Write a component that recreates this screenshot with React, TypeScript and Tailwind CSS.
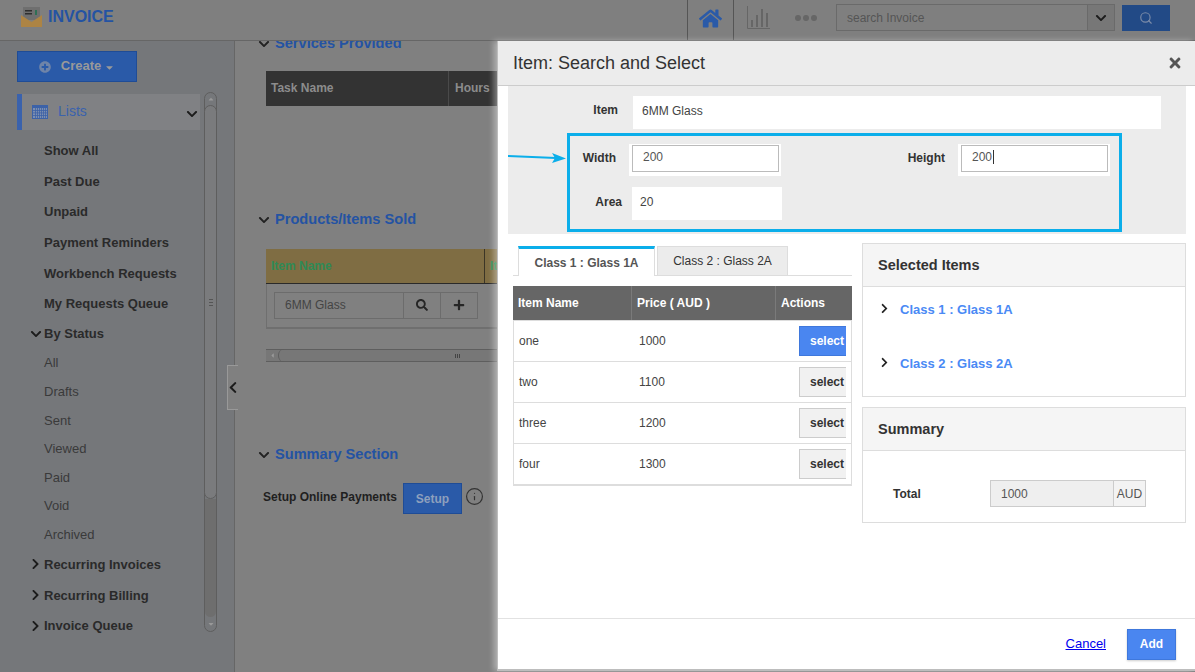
import { FaChevronDown, FaChevronLeft, FaChevronRight, FaHome, FaPlus, FaSearch, FaPlusCircle, FaTimes, FaCaretDown, FaCaretUp, FaCaretLeft } from 'react-icons/fa';
import { Search, Info } from 'lucide-react';

const boldItems = ['Show All', 'Past Due', 'Unpaid', 'Payment Reminders', 'Workbench Requests', 'My Requests Queue'];
const statusItems = ['All', 'Drafts', 'Sent', 'Viewed', 'Paid', 'Void', 'Archived'];
const moreItems = ['Recurring Invoices', 'Recurring Billing', 'Invoice Queue'];
const rows = [
  { name: 'one', price: '1000', active: true },
  { name: 'two', price: '1100', active: false },
  { name: 'three', price: '1200', active: false },
  { name: 'four', price: '1300', active: false },
];

function Logo() {
  return (
    <svg width="21" height="20" viewBox="0 0 21 20" className="shrink-0">
      <rect x="2" y="0" width="17" height="13" fill="#6f6f6f" />
      <rect x="4" y="3" width="7" height="1.5" fill="#2f2f2f" />
      <rect x="4" y="6" width="7" height="1.5" fill="#2f2f2f" />
      <rect x="14" y="3" width="2" height="5" fill="#2f6f55" />
      <path d="M0 8 L10.5 15 L21 8 V20 H0 Z" fill="#ad8444" />
    </svg>
  );
}

function CalendarIcon() {
  return (
    <svg width="16" height="14" viewBox="0 0 16 14" className="shrink-0">
      <rect x="0" y="0" width="16" height="14" fill="#3c62a8" />
      <rect x="1" y="3" width="14" height="10" fill="#7d8fb0" />
      {[3, 5, 7, 9, 11, 13].map((x) => <rect key={x} x={x} y="3" width="0.8" height="10" fill="#3c62a8" />)}
      {[5, 7.5, 10].map((y) => <rect key={y} x="1" y={y} width="14" height="0.8" fill="#3c62a8" />)}
    </svg>
  );
}

function SectionTitle({ children }: { children: string }) {
  return (
    <div className="flex items-center h-[20px]">
      <FaChevronDown className="w-[12px] h-[12px] text-[#222] ml-[23px] mr-[5px]" />
      <span className="text-[14.6px] font-bold text-[#2453a3]">{children}</span>
    </div>
  );
}

function Sidebar() {
  return (
    <aside className="w-[235px] shrink-0 h-full bg-[#75777a] border-r border-[#666] flex">
      <div className="w-[187px] shrink-0 ml-[17px]">
        <button className="mt-[10px] w-[120px] h-[31px] bg-[#2a5aa8] border border-[#1f4c96] flex items-center justify-center text-[13px] font-bold text-[#999] pb-[2px]">
          <FaPlusCircle className="w-[12px] h-[12px] text-[#6f84a8] mr-[10px] mt-[2px]" />
          Create
          <FaCaretDown className="w-[11px] h-[11px] ml-[3px] mt-[3px]" />
        </button>
        <div className="mt-[12px] w-[183px] h-[36px] bg-[#808184] border-l-[5px] border-[#3a62ad] flex items-center pl-[10px]">
          <CalendarIcon />
          <span className="ml-[10px] text-[14px] text-[#3a62ad] -mt-[2px]">Lists</span>
          <FaChevronDown className="w-[12px] h-[12px] text-[#1c1c1c] ml-auto mr-[2px] mt-[4px]" />
        </div>
        <ul className="mt-[5.3px] pl-[27px]">
          {boldItems.map((t) => (
            <li key={t} className="h-[30.7px] flex items-center text-[13px] font-bold text-[#2a2a2a]">{t}</li>
          ))}
          <li className="h-[29.5px] flex items-center text-[13px] font-bold relative text-[#2a2a2a]">
            <FaChevronDown className="absolute left-[-14px] w-[12px] h-[12px] text-[#1c1c1c]" />
            By Status
          </li>
          {statusItems.map((t) => (
            <li key={t} className="h-[28.6px] flex items-center text-[13px] text-[#3a3a3a]">{t}</li>
          ))}
          {moreItems.map((t) => (
            <li key={t} className="h-[30.8px] flex items-center text-[13px] font-bold relative text-[#2a2a2a]">
              <FaChevronRight className="absolute left-[-13px] w-[9px] h-[12px] text-[#1c1c1c]" />
              {t}
            </li>
          ))}
        </ul>
      </div>
      <div className="w-[13px] shrink-0 h-[540px] mt-[51px] border border-[#5e5e5e] rounded-[7px] flex flex-col items-center">
        <div className="h-[12px] flex items-center"><FaCaretUp className="w-[8px] h-[8px] text-[#999]" /></div>
        <div className="w-[13px] h-[394px] shrink-0 border border-[#5e5e5e] rounded-[7px] bg-[#7a7b7d] flex items-center justify-center">
          <span className="w-[4px] h-[7px] border-y border-[#555] flex items-center"><span className="w-full h-px bg-[#555]" /></span>
        </div>
        <div className="w-[11px] flex-1 bg-[#6e6e6e] rounded-b-[6px]" />
        <div className="h-[14px] flex items-center"><FaCaretDown className="w-[8px] h-[8px] text-[#999]" /></div>
      </div>
    </aside>
  );
}

function Background() {
  return (
    <main className="flex-1 h-full overflow-hidden bg-[#808080]">
      <div className="-mt-[7px]">
        <SectionTitle>Services Provided</SectionTitle>
        <div className="mt-[17px] ml-[31px] h-[35px] bg-[#333] flex items-center text-[12px] font-bold text-[#8c8c8c]">
          <span className="w-[183px] pl-[5px] pb-[2px] h-full flex items-center border-r border-[#4a4a4a]">Task Name</span>
          <span className="pl-[6px] pb-[2px]">Hours</span>
        </div>
        <div className="mt-[104px]"><SectionTitle>Products/Items Sold</SectionTitle></div>
        <div className="mt-[19px] ml-[31px] h-[35px] bg-[#7f6d43] border-b border-[#2a2a2a] flex items-center text-[12px] font-bold text-[#2f8a56]">
          <span className="w-[219px] pl-[5px] h-full flex items-center border-r border-[#3b3526]">Item Name</span>
          <span className="pl-[5px]">It</span>
        </div>
        <div className="ml-[31px] h-[45px] border-b-2 border-l border-[#6f6f6f] pl-[7px] pb-[1px] flex items-center">
          <div className="w-[204px] h-[27px] border border-[#6c6c6c] flex items-center text-[12px] text-[#444]">
            <span className="w-[129px] pl-[10px] h-full flex items-center border-r border-[#6c6c6c]">6MM Glass</span>
            <span className="w-[37px] h-full flex items-center justify-center border-r border-[#6c6c6c]"><FaSearch className="w-[12px] h-[12px] text-[#262626]" /></span>
            <span className="flex-1 flex items-center justify-center"><FaPlus className="w-[12px] h-[12px] text-[#262626]" /></span>
          </div>
        </div>
        <div className="mt-[20px] ml-[31px] h-[13px] border-y border-[#5e5e5e] bg-[#777] flex items-center">
          <FaCaretLeft className="w-[7px] h-[7px] text-[#999] ml-[3px]" />
          <span className="ml-[2px] h-[13px] w-[8px] border-l border-[#5e5e5e] rounded-l-[6px]" />
          <span className="ml-[169px] flex gap-[1px]">
            <span className="w-px h-[4px] bg-[#444]" />
            <span className="w-px h-[4px] bg-[#444]" />
            <span className="w-px h-[4px] bg-[#444]" />
          </span>
        </div>
        <div className="mt-[83px]"><SectionTitle>Summary Section</SectionTitle></div>
        <div className="mt-[18px] ml-[28px] flex items-center">
          <span className="w-[140px] pb-[3px] text-[12px] font-bold text-[#1f1f1f]">Setup Online Payments</span>
          <button className="w-[59px] h-[31px] bg-[#2a5aa8] border border-[#1f4c96] text-[12px] font-bold text-[#8ea0bd]">Setup</button>
          <Info className="w-[19px] h-[19px] ml-[3px] -mt-[4px] text-[#333]" strokeWidth={1.5} />
        </div>
      </div>
    </main>
  );
}

function Field({ label, value, labelClass, caret }: { label: string; value: string; labelClass: string; caret?: boolean }) {
  return (
    <div className="flex items-center">
      <label className={`text-[12px] font-bold text-[#333] pb-[4px] ${labelClass}`}>{label}</label>
      <div className="w-[152px] h-[32px] bg-white pt-[1px] pl-[3px] pr-[2px]">
        <div className="h-[27px] border border-[#bbb] flex items-center pl-[10px] pb-[3px] text-[12px] text-[#555]">
          {value}
          {caret && <span className="w-px h-[14px] bg-[#333] ml-px" />}
        </div>
      </div>
    </div>
  );
}

function ItemForm() {
  return (
    <section className="relative ml-[10px] mr-[9px] h-[148px] bg-[#ececec] pt-[10px]">
      <div className="flex items-center">
        <label className="w-[110px] text-right text-[12px] font-bold text-[#333] pb-[6px]">Item</label>
        <div className="ml-[15px] w-[528px] h-[33px] bg-white flex items-center pl-[9px] pb-[3px] text-[12px] text-[#444]">6MM Glass</div>
      </div>
      <div className="mt-[4px] ml-[59px] w-[555px] h-[99px] border-[3px] border-[#0baeea] pt-[8px]">
        <div className="flex">
          <Field label="Width" value="200" labelClass="w-[46px] text-right mr-[13px]" />
          <Field label="Height" value="200" labelClass="w-[164px] text-right mr-[13px]" caret />
        </div>
        <div className="mt-[11px] flex items-center">
          <label className="w-[52px] text-right text-[12px] font-bold text-[#333] pb-[4px]">Area</label>
          <div className="ml-[10px] w-[150px] h-[33px] bg-white flex items-center pl-[8px] pb-[4px] text-[12px] text-[#444]">20</div>
        </div>
      </div>
      <svg width="60" height="14" viewBox="0 0 60 14" className="absolute left-0 top-[64px]">
        <path d="M0 6 L48 8" stroke="#0baeea" strokeWidth="2" fill="none" />
        <path d="M44 3 L58 8.5 L44 13 L47 8 Z" fill="#0baeea" />
      </svg>
    </section>
  );
}

function ClassTable() {
  return (
    <div className="w-[339px] shrink-0 ml-[15px]">
      <div className="h-[32px] flex items-end border-b border-[#ddd] pl-[5px]">
        <div className="w-[137px] h-[30px] -mb-px bg-white border-t-[3px] border-x border-t-[#0baeea] border-x-[#ddd] flex items-center justify-center text-[12px] font-bold text-[#555]">Class 1 : Glass 1A</div>
        <div className="w-[131px] h-[29px] ml-[2px] bg-[#ececec] border border-b-0 border-[#ddd] flex items-center justify-center text-[12px] text-[#333]">Class 2 : Glass 2A</div>
      </div>
      <div className="mt-[10px] h-[34px] bg-[#666] flex items-center text-[12px] font-bold text-white">
        <span className="w-[119px] pl-[5px] h-full flex items-center border-r border-[#7a7a7a]">Item Name</span>
        <span className="w-[144px] pl-[5px] h-full flex items-center border-r border-[#7a7a7a]">Price ( AUD )</span>
        <span className="pl-[5px]">Actions</span>
      </div>
      <div className="border border-[#ddd]">
        {rows.map((r) => (
          <div key={r.name} className="h-[41px] border-b border-[#ddd] flex items-center text-[12px] text-[#444]">
            <span className="w-[125px] pl-[5px]">{r.name}</span>
            <span className="w-[160px]">{r.price}</span>
            <button className={`w-[47px] h-[30px] overflow-hidden whitespace-nowrap text-left pl-[10px] border border-r-0 text-[12px] font-bold ${r.active ? 'bg-[#4a86f0] border-[#3f78dc] text-white' : 'bg-[#f1f1f1] border-[#ccc] text-[#333]'}`}>select</button>
          </div>
        ))}
      </div>
    </div>
  );
}

function PanelHeader({ children, h }: { children: string; h: string }) {
  return <div className={`${h} bg-[#f5f5f5] border-b border-[#ddd] flex items-center pl-[15px] pt-[2px] text-[14.5px] font-bold text-[#333]`}>{children}</div>;
}

function RightPanels() {
  return (
    <div className="w-[324px] shrink-0 ml-[10px] -mt-[1px]">
      <div className="h-[154px] border border-[#ddd]">
        <PanelHeader h="h-[43px]">Selected Items</PanelHeader>
        {['Class 1 : Glass 1A', 'Class 2 : Glass 2A'].map((t) => (
          <div key={t} className="h-[54px] pb-[9px] flex items-center text-[13px] font-bold text-[#4a8af5] pl-[17px]">
            <FaChevronRight className="w-[9px] h-[11px] text-[#222] mr-[11px] -mt-[2px]" />
            <span>{t}</span>
          </div>
        ))}
      </div>
      <div className="mt-[10px] h-[116px] border border-[#ddd]">
        <PanelHeader h="h-[43px]">Summary</PanelHeader>
        <div className="flex items-center pl-[30px] pt-[29px]">
          <span className="w-[97px] text-[12px] font-bold text-[#333]">Total</span>
          <div className="w-[124px] h-[27px] bg-[#efefef] border border-[#ccc] flex items-center pl-[10px] text-[12px] text-[#555]">1000</div>
          <div className="w-[32px] h-[27px] bg-[#f3f3f3] border border-l-0 border-[#ccc] flex items-center justify-center text-[12px] text-[#555]">AUD</div>
        </div>
      </div>
    </div>
  );
}

function Modal() {
  return (
    <div className="absolute left-[497px] right-0 top-[41px] h-[630px] bg-white border-b-2 border-l border-[#bdbdbd] shadow-[-3px_0_6px_rgba(255,255,255,0.4)] flex flex-col">
      <header className="h-[45px] shrink-0 bg-[#ececec] border-b border-[#ccc] flex items-center pl-[15px] pr-[12px]">
        <h2 className="text-[18px] text-[#333]">Item: Search and Select</h2>
        <FaTimes className="ml-auto w-[16px] h-[16px] text-[#555]" />
      </header>
      <ItemForm />
      <div className="flex mt-[10px]">
        <ClassTable />
        <RightPanels />
      </div>
      <footer className="mt-auto h-[51px] border-t border-[#e2e2e2] flex items-center justify-end pr-[19px]">
        <a className="text-[13px] text-[#0000ee] underline mr-[21px]">Cancel</a>
        <button className="w-[49px] h-[31px] bg-[#4a86f0] border border-[#3f78dc] text-[12px] font-bold text-white shadow-[0_1px_2px_rgba(0,0,0,0.2)]">Add</button>
      </footer>
    </div>
  );
}

export default function App() {
  return (
    <div className="relative w-[1195px] h-[672px] overflow-hidden bg-[#808080] flex flex-col font-['Liberation_Sans',Arial,sans-serif]">
      <header className="h-[41px] shrink-0 bg-[#7f7f7f] border-b border-[#666] flex items-center">
        <div className="ml-[21px] flex items-center -mt-[6px]">
          <Logo />
          <span className="ml-[6px] text-[16px] font-bold text-[#2453a3]">INVOICE</span>
        </div>
        <div className="ml-auto h-full flex items-center">
          <div className="w-[47px] h-full border-x border-[#555] flex items-center justify-center">
            <FaHome className="w-[23px] h-[21px] text-[#2a5aa8] -mt-[4px]" />
          </div>
          <svg width="23" height="23" viewBox="0 0 23 23" className="ml-[13px] -mt-[5px]">
            <path d="M0.5 0 V22.5 H23" stroke="#666" fill="none" />
            <path d="M5 21 V14 M10 21 V9 M15 21 V3 M20 21 V7" stroke="#666" strokeWidth="2" fill="none" />
          </svg>
          <div className="ml-[25px] flex gap-[2px] -mt-[5px]">
            <span className="w-[6px] h-[6px] rounded-full bg-[#666]" />
            <span className="w-[6px] h-[6px] rounded-full bg-[#666]" />
            <span className="w-[6px] h-[6px] rounded-full bg-[#666]" />
          </div>
          <div className="ml-[19px] w-[279px] h-[27px] border border-[#6a6a6a] flex items-center -mt-[5px]">
            <span className="flex-1 pl-[10px] text-[12px] text-[#555]">search Invoice</span>
            <span className="w-[27px] h-full bg-[#777] border-l border-[#6a6a6a] flex items-center justify-center">
              <FaChevronDown className="w-[12px] h-[12px] text-[#1c1c1c]" />
            </span>
          </div>
          <button className="ml-[7px] mr-[25px] w-[48px] h-[26px] bg-[#224a86] flex items-center justify-center -mt-[5px]">
            <Search className="w-[14px] h-[14px] text-[#7a8ba8]" />
          </button>
        </div>
      </header>
      <div className="flex-1 flex min-h-0">
        <Sidebar />
        <Background />
      </div>
      <div className="absolute left-[227px] top-[365px] w-[11px] h-[45px] bg-[#808080] border border-r-0 border-[#999] flex items-center justify-center">
        <FaChevronLeft className="w-[10px] h-[13px] text-[#1c1c1c] shrink-0" />
      </div>
      <Modal />
    </div>
  );
}
